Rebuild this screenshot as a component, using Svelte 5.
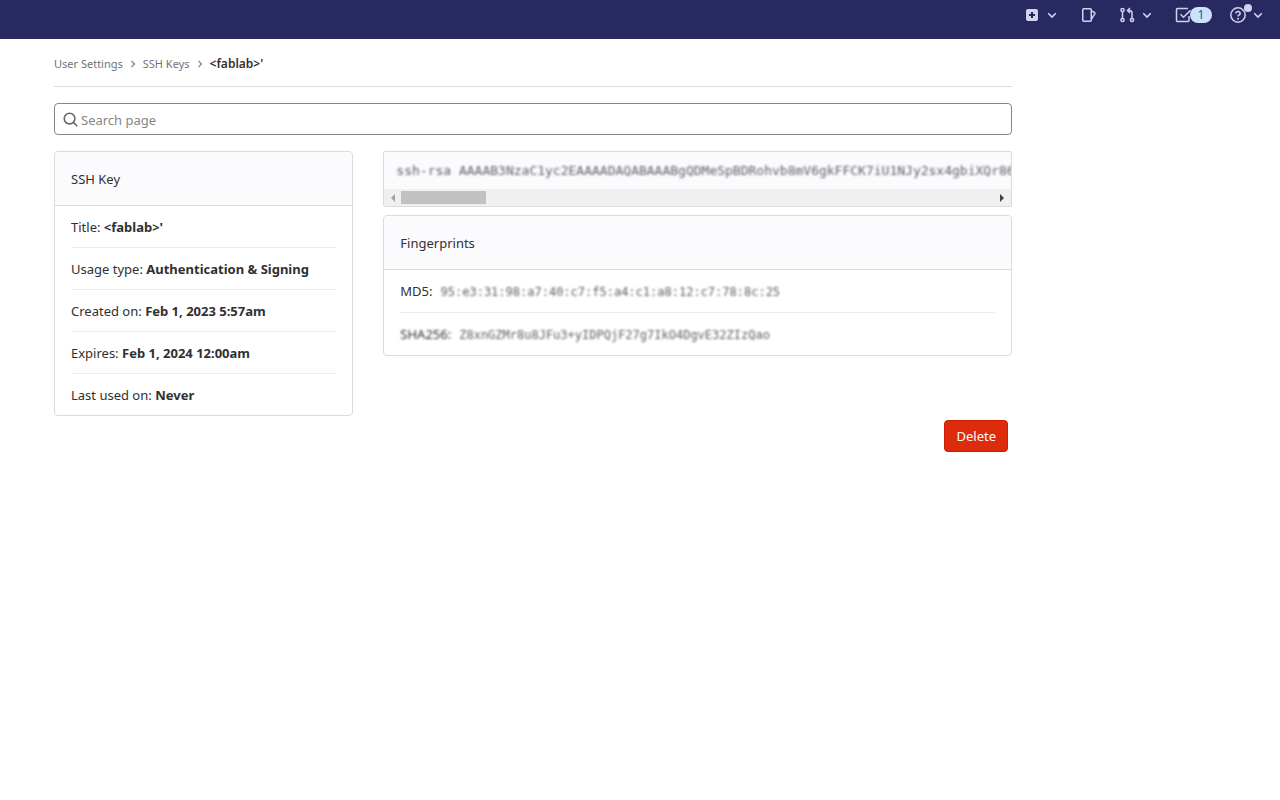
<script>
  let search = $state('');
  let keyBox;

  const publicKey =
    'ssh-rsa AAAAB3NzaC1yc2EAAAADAQABAAABgQDMeSpBDRohvb8mV6gkFFCK7iU1NJy2sx4gbiXQr86z';

  const details = [
    { label: 'Title:', value: "<fablab>'" },
    { label: 'Usage type:', value: 'Authentication & Signing' },
    { label: 'Created on:', value: 'Feb 1, 2023 5:57am' },
    { label: 'Expires:', value: 'Feb 1, 2024 12:00am' },
    { label: 'Last used on:', value: 'Never' }
  ];

  const fingerprints = [
    { label: 'MD5:', value: '95:e3:31:98:a7:40:c7:f5:a4:c1:a8:12:c7:78:8c:25', hidden: false },
    { label: 'SHA256:', value: 'Z8xnGZMr8u8JFu3+yIDPQjF27g7IkO4DgvE32ZIzQao', hidden: true }
  ];

  const scrollKey = (amount) => {
    keyBox.scrollLeft += amount;
  };
</script>

{#snippet chevron()}
  <svg class="chevron" viewBox="0 0 10 10" aria-hidden="true">
    <path d="M1.7 3.7 5 7l3.3-3.3" />
  </svg>
{/snippet}

<header class="navbar">
  <button class="nav-item" aria-label="Create new">
    <svg class="icon" viewBox="0 0 16 16">
      <rect class="solid" x="2" y="2" width="12" height="12" rx="2" />
      <path class="dark" d="M8 5v6M5 8h6" />
    </svg>
    {@render chevron()}
  </button>
  <a class="nav-item" href="#issues" aria-label="Issues">
    <svg class="icon" viewBox="0 0 16 16">
      <rect x="2.75" y="1.75" width="8.5" height="12.5" rx="1" />
      <path d="M11.5 4l2.8 1.3q1 .5.5 1.5L11.5 12" />
    </svg>
  </a>
  <button class="nav-item" aria-label="Merge requests">
    <svg class="icon" viewBox="0 0 16 16">
      <circle cx="3.5" cy="3" r="1.6" />
      <circle cx="3.5" cy="13" r="1.6" />
      <circle cx="13" cy="13" r="1.6" />
      <path d="M3.5 4.8v6.4M13 11.2V6q0-2.5-2.5-2.5H9M11 1 8.5 3.5 11 6" />
    </svg>
    {@render chevron()}
  </button>
  <a class="nav-item todos" href="#todos" aria-label="To-Do List">
    <svg class="icon" viewBox="0 0 16 16">
      <path d="M14 9v4.5q0 1-1 1H2.5q-1 0-1-1v-11q0-1 1-1H13M5.5 7.2l3 3L15.5 3.4" />
    </svg>
    <span class="count">1</span>
  </a>
  <button class="nav-item help" aria-label="Help">
    <svg class="icon" viewBox="0 0 16 16">
      <circle cx="8" cy="8" r="7.2" />
      <path d="M5.8 6.4Q6 4.4 8 4.4t2.2 1.9Q10.2 7.4 9 8 8 8.5 8 9.5" />
      <circle class="solid" cx="8" cy="11.7" r="1" />
    </svg>
    <span class="dot"></span>
    {@render chevron()}
  </button>
</header>

<main class="content">
  <nav class="breadcrumbs" aria-label="Breadcrumbs">
    <a href="#settings">User Settings</a>
    <svg class="separator" viewBox="0 0 8 8" aria-hidden="true"><path d="M2.5 1 5.5 4l-3 3" /></svg>
    <a href="#keys">SSH Keys</a>
    <svg class="separator" viewBox="0 0 8 8" aria-hidden="true"><path d="M2.5 1 5.5 4l-3 3" /></svg>
    <a class="current" href="#key">{"<fablab>'"}</a>
  </nav>

  <label class="search">
    <svg class="search-icon" viewBox="0 0 16 16" aria-hidden="true">
      <circle cx="7" cy="7" r="5.7" />
      <path d="m11.2 11.2 3.5 3.5" />
    </svg>
    <input type="text" placeholder="Search page" aria-label="Search page" bind:value={search} />
  </label>

  <div class="row">
    <div class="col-side">
      <section class="card">
        <h2 class="card-header">SSH Key</h2>
        <ul class="list">
          {#each details as item}
            <li>{item.label} <strong>{item.value}</strong></li>
          {/each}
        </ul>
      </section>
    </div>

    <div class="col-main">
      <div class="key-box">
        <pre bind:this={keyBox}><code>{publicKey}</code></pre>
        <div class="scrollbar">
          <button class="arrow left" aria-label="Scroll left" onclick={() => scrollKey(-40)}></button>
          <div class="track"><div class="thumb"></div></div>
          <button class="arrow right" aria-label="Scroll right" onclick={() => scrollKey(40)}></button>
        </div>
      </div>

      <section class="card">
        <h2 class="card-header">Fingerprints</h2>
        <ul class="list fingerprints">
          {#each fingerprints as item}
            <li><span class:blurred={item.hidden}>{item.label}</span> <code>{item.value}</code></li>
          {/each}
        </ul>
      </section>
    </div>
  </div>

  <div class="actions">
    <button class="delete">Delete</button>
  </div>
</main>

<style>
  :global(body) {
    background: #fff;
    color: #303030;
    font-family: 'Noto Sans', 'Open Sans', sans-serif;
    font-size: 13px;
    line-height: 21px;
  }

  .navbar {
    display: flex;
    justify-content: flex-end;
    align-items: flex-start;
    gap: 23px;
    box-sizing: border-box;
    height: 39px;
    padding: 7px 17px 0 0;
    background: #292961;
  }

  .nav-item {
    position: relative;
    display: flex;
    align-items: center;
    gap: 7px;
    height: 16px;
    padding: 0;
    border: 0;
    background: none;
    text-decoration: none;
    cursor: pointer;
  }

  .icon {
    width: 16px;
    height: 16px;
    fill: none;
    stroke: #d1d1f0;
    stroke-width: 1.5;
  }

  .solid {
    fill: #d1d1f0;
    stroke: none;
  }

  .dark {
    stroke: #292961;
    stroke-width: 2;
  }

  .chevron {
    width: 10px;
    height: 10px;
    fill: none;
    stroke: #d1d1f0;
    stroke-width: 1.6;
    stroke-linecap: round;
  }

  .todos {
    gap: 0;
  }

  .help {
    margin-left: -5px;
  }

  .count {
    width: 22px;
    height: 16px;
    margin-left: -1px;
    border-radius: 8px;
    background: #cbe2f9;
    color: #0b5cad;
    font-size: 12px;
    line-height: 16px;
    text-align: center;
  }

  .dot {
    position: absolute;
    top: -3px;
    left: 14px;
    width: 8px;
    height: 8px;
    border-radius: 50%;
    background: #d1d1f0;
  }

  .content {
    max-width: 958px;
    padding: 0 16px 0 54px;
  }

  .breadcrumbs {
    display: flex;
    align-items: center;
    gap: 6px;
    box-sizing: border-box;
    height: 48px;
    padding-top: 2px;
    border-bottom: 1px solid #dbdbdb;
    font-size: 11px;
  }

  .breadcrumbs a {
    color: #737278;
    text-decoration: none;
  }

  .breadcrumbs .current {
    color: #303030;
    font-size: 12px;
    font-weight: 600;
  }

  .separator {
    width: 8px;
    height: 8px;
    fill: none;
    stroke: #89888d;
    stroke-width: 1.3;
  }

  .search {
    display: flex;
    align-items: center;
    gap: 3px;
    box-sizing: border-box;
    height: 32px;
    margin: 16px 0;
    padding: 0 8px;
    border: 1px solid #868686;
    border-radius: 4px;
  }

  .search-icon {
    width: 15px;
    height: 15px;
    fill: none;
    stroke: #666;
    stroke-width: 1.7;
    stroke-linecap: round;
  }

  .search input {
    flex: 1;
    min-width: 0;
    padding: 2px 0 0;
    border: 0;
    outline: 0;
    background: none;
    color: #303030;
    font: inherit;
  }

  .search input::placeholder {
    color: #868686;
  }

  .row {
    display: flex;
    margin: 0 -15px;
  }

  .col-side,
  .col-main {
    box-sizing: border-box;
    min-width: 0;
    padding: 0 15px;
  }

  .col-side {
    width: calc(100% / 3);
  }

  .col-main {
    width: calc(200% / 3);
  }

  .card {
    border: 1px solid #dbdbdb;
    border-radius: 4px;
    overflow: hidden;
  }

  .card-header {
    margin: 0;
    padding: 17px 16px 15px;
    border-bottom: 1px solid #dbdbdb;
    background: #fbfafd;
    font-size: 13px;
    font-weight: 400;
  }

  .list {
    margin: 0;
    padding: 0 16px;
    list-style: none;
  }

  .list li {
    padding: 11px 0 9px;
    border-bottom: 1px solid #ececef;
  }

  .list li:last-child {
    border-bottom: 0;
  }

  .list.fingerprints li {
    display: flex;
    align-items: center;
    gap: 8px;
    height: 22px;
    padding: 10px 0;
  }

  code {
    color: #626168;
    font-family: 'DejaVu Sans Mono', monospace;
    filter: blur(1px);
  }

  .fingerprints code {
    padding-top: 2px;
    font-size: 12px;
  }

  .blurred {
    filter: blur(1px);
  }

  .key-box {
    margin-bottom: 8px;
    border: 1px solid #dbdbdb;
    border-radius: 2px;
    background: #fbfafd;
  }

  pre {
    margin: 0;
    padding: 8px 0 8px 12px;
    overflow: hidden;
    font-family: 'DejaVu Sans Mono', monospace;
    font-size: 13px;
  }

  pre code {
    display: block;
    width: max-content;
  }

  .scrollbar {
    display: flex;
    align-items: center;
    justify-content: space-between;
    height: 17px;
    background: #f0f0f0;
  }

  .track {
    flex: 1;
  }

  .thumb {
    width: 85px;
    height: 13px;
    background: #c1c1c1;
  }

  .arrow {
    display: flex;
    align-items: center;
    justify-content: center;
    width: 17px;
    height: 17px;
    padding: 0;
    border: 0;
    background: none;
  }

  .arrow::before {
    content: '';
    border: 4px solid transparent;
  }

  .arrow.left::before {
    border-left-width: 0;
    border-right-color: #a3a3a3;
  }

  .arrow.right::before {
    border-right-width: 0;
    border-left-color: #404040;
  }

  .actions {
    display: flex;
    justify-content: flex-end;
    margin-top: 4px;
    padding-right: 4px;
  }

  .delete {
    height: 32px;
    padding: 0 11px;
    border: 1px solid #c91c00;
    border-radius: 4px;
    background: #dd2b0e;
    color: #fff;
    font: inherit;
    cursor: pointer;
  }
</style>
